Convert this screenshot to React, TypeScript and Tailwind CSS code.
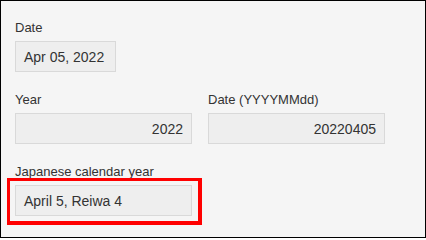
import React from "react";

const Label = ({ children }: { children: React.ReactNode }) => (
  <div className="text-[13px] leading-5 text-[#333333] h-5 whitespace-nowrap">{children}</div>
);

const Box = ({ children, right, w }: { children: React.ReactNode; right?: boolean; w: string }) => (
  <div
    className={`mt-[3px] h-[31px] ${w} border border-[#d9d9d9] bg-[#eeeeee] flex items-center pt-[1px] text-[14px] text-[#333333] ${
      right ? "justify-end pr-[8px]" : "pl-[8px]"
    }`}
  >
    {children}
  </div>
);

export default function App() {
  return (
    <div
      className="relative w-[426px] h-[238px] border border-black bg-[#f5f5f5] pl-[14px] pt-[17px]"
      style={{ fontFamily: '"Liberation Sans", Arial, sans-serif' }}
    >
      <div>
        <Label>Date</Label>
        <Box w="w-[101px]">Apr 05, 2022</Box>
      </div>
      <div className="mt-[18px] flex gap-4">
        <div>
          <Label>Year</Label>
          <Box w="w-[177px]" right>
            2022
          </Box>
        </div>
        <div>
          <Label>Date (YYYYMMdd)</Label>
          <Box w="w-[177px]" right>
            20220405
          </Box>
        </div>
      </div>
      <div className="mt-[18px]">
        <Label>Japanese calendar year</Label>
        <Box w="w-[177px]">April 5, Reiwa 4</Box>
      </div>
      <div className="absolute left-[6px] top-[177px] w-[195px] h-[47px] border-[3px] border-r-4 border-b-4 border-[#ff0000] pointer-events-none" />
    </div>
  );
}
